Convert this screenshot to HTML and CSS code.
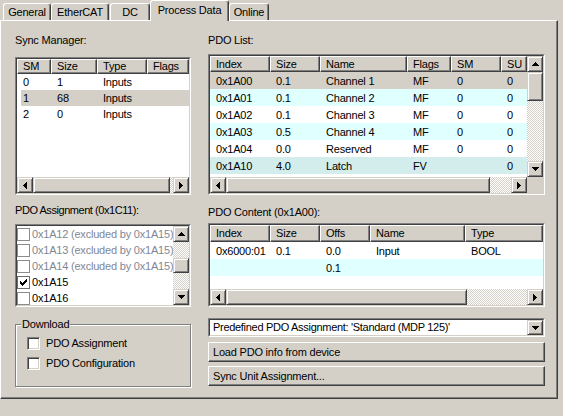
FILE: index.html
```html
<!DOCTYPE html>
<html>
<head>
<meta charset="utf-8">
<link rel="stylesheet" href="styles.css">
</head>
<body>
<svg class="defs" width="0" height="0" aria-hidden="true">
  <defs>
    <symbol id="a-up" viewBox="0 0 7 4"><rect x="3" y="0" width="1" height="1"/><rect x="2" y="1" width="3" height="1"/><rect x="1" y="2" width="5" height="1"/><rect x="0" y="3" width="7" height="1"/></symbol>
    <symbol id="a-down" viewBox="0 0 7 4"><rect x="0" y="0" width="7" height="1"/><rect x="1" y="1" width="5" height="1"/><rect x="2" y="2" width="3" height="1"/><rect x="3" y="3" width="1" height="1"/></symbol>
    <symbol id="a-left" viewBox="0 0 4 7"><rect x="0" y="3" width="1" height="1"/><rect x="1" y="2" width="1" height="3"/><rect x="2" y="1" width="1" height="5"/><rect x="3" y="0" width="1" height="7"/></symbol>
    <symbol id="a-right" viewBox="0 0 4 7"><rect x="0" y="0" width="1" height="7"/><rect x="1" y="1" width="1" height="5"/><rect x="2" y="2" width="1" height="3"/><rect x="3" y="3" width="1" height="1"/></symbol>
    <symbol id="cb-off" viewBox="0 0 13 13"><rect x="0.5" y="0.5" width="12" height="12" fill="#fff" stroke="#8c8c8c"/></symbol>
    <symbol id="cb-on" viewBox="0 0 13 13"><rect x="0.5" y="0.5" width="12" height="12" fill="#fff" stroke="#6e6e6e"/>
      <rect x="9" y="3" width="1" height="1"/><rect x="8" y="4" width="2" height="1"/><rect x="3" y="5" width="1" height="1"/><rect x="7" y="5" width="3" height="1"/><rect x="3" y="6" width="2" height="1"/><rect x="6" y="6" width="3" height="1"/><rect x="3" y="7" width="5" height="1"/><rect x="4" y="8" width="3" height="1"/><rect x="5" y="9" width="1" height="1"/></symbol>
  </defs>
</svg>

<div class="tabs">
  <div class="tab t-general">General</div>
  <div class="tab t-ethercat">EtherCAT</div>
  <div class="tab t-dc">DC</div>
  <div class="tab sel t-pd">Process Data</div>
  <div class="tab t-online">Online</div>
</div>

<div class="panel">
  <div class="col">
    <div class="label lbl-sm">Sync Manager:</div>
    <div class="lv lv-sm">
      <div class="lv-in nv">
        <div class="lv-main">
          <div class="lv-head h15">
            <div class="th c34">SM</div><div class="th c46">Size</div><div class="th c50">Type</div><div class="th cfill">Flags</div>
          </div>
          <div class="row r16"><div class="td c34">0</div><div class="td c46">1</div><div class="td c50">Inputs</div></div>
          <div class="row r16 selsm"><div class="td c30 p2">1</div><div class="td c46">68</div><div class="td c50">Inputs</div></div>
          <div class="row r16"><div class="td c34">2</div><div class="td c46">0</div><div class="td c50">Inputs</div></div>
        </div>
        <div class="hscroll">
          <div class="sbb"><svg class="ar-h"><use href="#a-left"/></svg></div>
          <div class="thumb tw137"></div>
          <div class="track"></div>
          <div class="sbb"><svg class="ar-h"><use href="#a-right"/></svg></div>
        </div>
      </div>
    </div>

    <div class="label lbl-assign">PDO Assignment (0x1C11):</div>
    <div class="lb">
      <div class="lb-in">
        <div class="lb-items">
          <div class="item dis"><svg class="cb"><use href="#cb-off"/></svg><span>0x1A12 (excluded by 0x1A15)</span></div>
          <div class="item dis"><svg class="cb"><use href="#cb-off"/></svg><span>0x1A13 (excluded by 0x1A15)</span></div>
          <div class="item dis"><svg class="cb"><use href="#cb-off"/></svg><span>0x1A14 (excluded by 0x1A15)</span></div>
          <div class="item"><svg class="cb"><use href="#cb-on"/></svg><span>0x1A15</span></div>
          <div class="item"><svg class="cb"><use href="#cb-off"/></svg><span>0x1A16</span></div>
        </div>
        <div class="vscroll">
          <div class="sbb"><svg class="ar-v"><use href="#a-up"/></svg></div>
          <div class="track th18"></div>
          <div class="thumb thh15"></div>
          <div class="track"></div>
          <div class="sbb"><svg class="ar-v"><use href="#a-down"/></svg></div>
        </div>
      </div>
    </div>

    <div class="group">
      <div class="legend">Download</div>
      <div class="chk-row"><div class="chk3d"></div><span>PDO Assignment</span></div>
      <div class="chk-row"><div class="chk3d"></div><span>PDO Configuration</span></div>
    </div>
  </div>

  <div class="col">
    <div class="label lbl-list">PDO List:</div>
    <div class="lv lv-list">
      <div class="lv-in vs">
        <div class="lv-main">
          <div class="lv-head h16">
            <div class="th c60">Index</div><div class="th c50">Size</div><div class="th c87">Name</div><div class="th c44">Flags</div><div class="th c50">SM</div><div class="th cfill">SU</div>
          </div>
          <div class="row r17 gray"><div class="td c60">0x1A00</div><div class="td c50">0.1</div><div class="td c87">Channel 1</div><div class="td c44">MF</div><div class="td c50">0</div><div class="td cfill">0</div></div>
          <div class="row r17 cyan"><div class="td c60">0x1A01</div><div class="td c50">0.1</div><div class="td c87">Channel 2</div><div class="td c44">MF</div><div class="td c50">0</div><div class="td cfill">0</div></div>
          <div class="row r17"><div class="td c60">0x1A02</div><div class="td c50">0.1</div><div class="td c87">Channel 3</div><div class="td c44">MF</div><div class="td c50">0</div><div class="td cfill">0</div></div>
          <div class="row r17 cyan"><div class="td c60">0x1A03</div><div class="td c50">0.5</div><div class="td c87">Channel 4</div><div class="td c44">MF</div><div class="td c50">0</div><div class="td cfill">0</div></div>
          <div class="row r17"><div class="td c60">0x1A04</div><div class="td c50">0.0</div><div class="td c87">Reserved</div><div class="td c44">MF</div><div class="td c50">0</div><div class="td cfill">0</div></div>
          <div class="row r17 teal"><div class="td c60">0x1A10</div><div class="td c50">4.0</div><div class="td c87">Latch</div><div class="td c44">FV</div><div class="td c50"></div><div class="td cfill">0</div></div>
        </div>
        <div class="vscroll">
          <div class="sbb"><svg class="ar-v"><use href="#a-up"/></svg></div>
          <div class="thumb thh29"></div>
          <div class="track"></div>
          <div class="sbb"><svg class="ar-v"><use href="#a-down"/></svg></div>
        </div>
        <div class="hscroll">
          <div class="sbb"><svg class="ar-h"><use href="#a-left"/></svg></div>
          <div class="thumb tw264"></div>
          <div class="track"></div>
          <div class="sbb"><svg class="ar-h"><use href="#a-right"/></svg></div>
        </div>
        <div class="corner"></div>
      </div>
    </div>

    <div class="label lbl-content">PDO Content (0x1A00):</div>
    <div class="lv lv-content">
      <div class="lv-in nv">
        <div class="lv-main">
          <div class="lv-head h17">
            <div class="th c60">Index</div><div class="th c50">Size</div><div class="th c50">Offs</div><div class="th c95">Name</div><div class="th cfill">Type</div>
          </div>
          <div class="row r17"><div class="td c60">0x6000:01</div><div class="td c50">0.1</div><div class="td c50">0.0</div><div class="td c95">Input</div><div class="td cfill">BOOL</div></div>
          <div class="row r17 cyan"><div class="td c60"></div><div class="td c50"></div><div class="td c50">0.1</div><div class="td c95"></div><div class="td cfill"></div></div>
        </div>
        <div class="hscroll">
          <div class="sbb"><svg class="ar-h"><use href="#a-left"/></svg></div>
          <div class="thumb tw241"></div>
          <div class="track"></div>
          <div class="sbb"><svg class="ar-h"><use href="#a-right"/></svg></div>
        </div>
      </div>
    </div>

    <div class="combo">
      <div class="combo-in">
        <span class="combo-text">Predefined PDO Assignment: 'Standard (MDP 125)'</span>
        <div class="sbb dd"><svg class="ar-v"><use href="#a-down"/></svg></div>
      </div>
    </div>
    <div class="btn b1">Load PDO info from device</div>
    <div class="btn b2">Sync Unit Assignment...</div>
  </div>
</div>
</body>
</html>
```

FILE: styles.css
```css
* { box-sizing: border-box; }
html, body { margin: 0; padding: 0; }
body {
  width: 563px;
  height: 416px;
  background: #d4d0c8;
  font-family: "Liberation Sans", Arial, sans-serif;
  font-size: 11px;
  letter-spacing: -0.2px;
  line-height: 13px;
  color: #000;
  overflow: hidden;
}
.defs { position: absolute; width: 0; height: 0; overflow: hidden; }

/* Tabs */
.tabs { display: flex; height: 20px; padding-left: 3px; align-items: flex-start; }
.tab {
  height: 17px;
  margin-top: 3px;
  border-top: 1px solid #fff;
  border-left: 1px solid #fff;
  border-right: 1px solid #404040;
  border-radius: 3px 3px 0 0;
  box-shadow: inset -1px 0 #808080;
  text-align: center;
  line-height: 16px;
  white-space: nowrap;
  flex: none;
}
.tab.sel { height: 21px; margin-top: 0; position: relative; background: #d4d0c8; line-height: 18px; }
.t-general { width: 48px; }
.t-ethercat { width: 58px; }
.t-dc { width: 40px; margin-left: 1px; }
.t-pd { width: 79px; }
.t-online { width: 40px; }

/* Panel */
.panel {
  width: 558px;
  height: 379px;
  border-top: 1px solid #fff;
  border-left: 1px solid #fff;
  border-right: 1px solid #404040;
  border-bottom: 1px solid #404040;
  box-shadow: inset -1px -1px #808080;
  padding: 13px 0 0 14px;
  display: grid;
  grid-template-columns: 176px 337px;
  column-gap: 17px;
  align-items: start;
}
.col { display: flex; flex-direction: column; }
.label { height: 13px; white-space: nowrap; }
.lbl-sm { margin-bottom: 10px; }
.lbl-assign { margin-top: 9px; margin-bottom: 7px; letter-spacing: -0.45px; }
.lbl-list { margin-bottom: 7px; }
.lbl-content { margin-top: 11px; margin-bottom: 4px; }

/* Sunken list view */
.lv, .lb, .combo {
  border: 1px solid;
  border-color: #808080 #fff #fff #808080;
  background: #fff;
}
.lv-in, .lb-in, .combo-in {
  height: 100%;
  border: 1px solid;
  border-color: #404040 #d4d0c8 #d4d0c8 #404040;
}
.lv-sm { height: 138px; }
.lv-list { height: 141px; }
.lv-content { height: 84px; }
.lv-in { display: grid; }
.lv-in.nv { grid-template-columns: minmax(0, 1fr); grid-template-rows: minmax(0, 1fr) 16px; }
.lv-in.vs { grid-template-columns: minmax(0, 1fr) 16px; grid-template-rows: minmax(0, 1fr) 16px; }
.lv-main { overflow: hidden; background: #fff; min-width: 0; min-height: 0; }
.lv-head { display: flex; background: #d4d0c8; }
.h15 { height: 15px; }
.h16 { height: 16px; }
.h17 { height: 17px; }
.th {
  flex: none;
  height: 100%;
  border-top: 1px solid #fff;
  border-left: 1px solid #fff;
  border-right: 1px solid #404040;
  border-bottom: 1px solid #404040;
  box-shadow: inset -1px -1px #808080;
  padding-left: 5px;
  white-space: nowrap;
  overflow: hidden;
  display: flex;
  align-items: center;
}
.row { display: flex; }
.r16 { height: 16px; line-height: 16px; }
.r17 { height: 17px; line-height: 16px; padding-top: 1px; }
.td { flex: none; padding-left: 6px; white-space: nowrap; overflow: hidden; }
.p2 { padding-left: 2px; }
.selsm { margin-left: 4px; background: #d4d0c8; }
.gray { background: #d4d0c8; }
.cyan { background: #e0ffff; }
.teal { background: #d3ecec; }
.c30 { width: 30px; }
.c34 { width: 34px; }
.c44 { width: 44px; }
.c46 { width: 46px; }
.c50 { width: 50px; }
.c60 { width: 60px; }
.c87 { width: 87px; }
.c95 { width: 95px; }
.cfill { flex: 1 0 auto; }

/* Scrollbars */
.hscroll { display: flex; height: 16px; }
.vscroll { display: flex; flex-direction: column; width: 16px; }
.sbb, .thumb {
  background: #d4d0c8;
  border: 1px solid;
  border-color: #d4d0c8 #404040 #404040 #d4d0c8;
  box-shadow: inset 1px 1px #fff, inset -1px -1px #808080;
}
.sbb { width: 16px; height: 16px; flex: none; display: flex; align-items: center; justify-content: center; }
.thumb { flex: none; }
.tw137 { width: 137px; }
.tw264 { width: 264px; }
.tw241 { width: 241px; }
.thh29 { height: 29px; }
.thh15 { height: 15px; }
.th18 { flex: none; height: 18px; }
.track {
  flex: 1;
  background: repeating-conic-gradient(#fff 0 25%, #d4d0c8 0 50%) 0 0 / 2px 2px;
}
.ar-v { width: 7px; height: 4px; fill: #000; display: block; }
.ar-h { width: 4px; height: 7px; fill: #000; display: block; }
.corner { background: #d4d0c8; }

/* List box */
.lb { height: 83px; }
.lb-in { display: grid; grid-template-columns: minmax(0, 1fr) 16px; background: #fff; }
.lb-items { overflow: hidden; min-width: 0; }
.item { display: flex; align-items: center; height: 16px; white-space: nowrap; }
.item span { margin-left: 2px; }
.item.dis { color: #7f8794; }
.cb { width: 13px; height: 13px; flex: none; fill: #000; display: block; }

/* Group box */
.group {
  position: relative;
  margin-top: 17px;
  height: 63px;
  border: 1px solid #808080;
  box-shadow: inset 1px 1px #fff, 1px 1px #fff;
  padding: 12px 0 0 11px;
}
.legend {
  position: absolute;
  left: 5px;
  top: -7px;
  padding: 0 1px;
  background: #d4d0c8;
  line-height: 13px;
}
.chk-row { display: flex; align-items: center; height: 13px; margin-bottom: 7px; white-space: nowrap; }
.chk-row span { margin-left: 6px; }
.chk3d {
  width: 13px;
  height: 13px;
  flex: none;
  background: #fff;
  border: 1px solid;
  border-color: #808080 #fff #fff #808080;
  box-shadow: inset 1px 1px #404040, inset -1px -1px #d4d0c8;
}

/* Combo and buttons */
.combo { height: 19px; margin-top: 11px; }
.combo-in { display: flex; align-items: center; }
.combo-text { flex: 1; padding-left: 3px; white-space: nowrap; overflow: hidden; letter-spacing: -0.3px; }
.dd { height: 15px; }
.btn {
  height: 20px;
  border: 1px solid;
  border-color: #fff #404040 #404040 #fff;
  box-shadow: inset -1px -1px #808080;
  padding-left: 4px;
  line-height: 18px;
  white-space: nowrap;
}
.b1 { margin-top: 5px; }
.b2 { margin-top: 4px; }
```
